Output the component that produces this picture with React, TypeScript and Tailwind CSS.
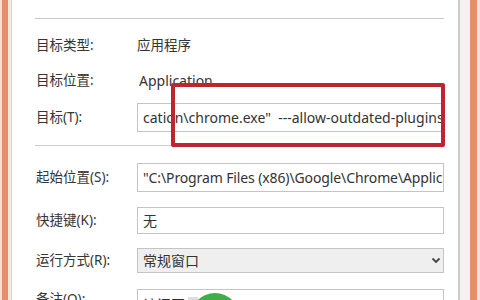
import React from 'react';

const font = { fontFamily: '"Noto Sans", "Noto Sans CJK SC", sans-serif' };

interface FieldProps {
  label: string;
  children: React.ReactNode;
  className?: string;
}

const Field: React.FC<FieldProps> = ({ label, children, className }) => (
  <div className={`flex shrink-0 items-center ${className ?? ''}`}>
    <div className="w-[101px] shrink-0 text-[13.5px] text-[#353535]">{label}</div>
    {children}
  </div>
);

const Box: React.FC<{ children?: React.ReactNode; className?: string }> = ({ children, className }) => (
  <div
    className={`flex-1 flex items-center border border-[#c4c4c4] pl-[5px] pr-[4px] text-[14px] text-[#333] whitespace-nowrap overflow-hidden ${className ?? ''}`}
  >
    {children}
  </div>
);

export default function App() {
  return (
    <div className="w-[480px] h-[300px] overflow-hidden flex bg-white" style={font}>
      {/* left window edge */}
      <div className="w-[2px] bg-[#f3e0d5]" />
      <div className="w-[6px] bg-[#e38f68]" />
      <div className="w-[3px] bg-[#f7e8e0]" />
      <div className="w-[1px] bg-[#d4d4d4]" />

      <div className="relative w-[446px] pl-[24px] pr-[14px] flex flex-col">
        <div className="h-[18px] shrink-0" />
        <div className="shrink-0 -ml-[1px] border-t border-[#c9c9c9]" />

        <Field label="目标类型:" className="mt-[14px] h-[24px]">
          <span className="text-[13.5px] text-[#333]">应用程序</span>
        </Field>
        <Field label="目标位置:" className="mt-[11px] h-[24px]">
          <span className="pl-[2px] text-[14px] text-[#333]">Application</span>
        </Field>
        <Field label="目标(T):" className="mt-[11px] h-[29px]">
          <Box className="h-[29px]">cation\chrome.exe"&nbsp; ---allow-outdated-plugins</Box>
        </Field>

        <div className="shrink-0 mt-[13px] -ml-[1px] border-t border-[#cfcfcf]" />

        <Field label="起始位置(S):" className="mt-[17px] h-[29px]">
          <Box className="h-[29px] tracking-[-0.12px]">"C:\Program Files (x86)\Google\Chrome\Applic</Box>
        </Field>
        <Field label="快捷键(K):" className="mt-[15px] h-[27px]">
          <Box className="h-[27px]">无</Box>
        </Field>
        <Field label="运行方式(R):" className="mt-[14px] h-[25px]">
          <Box className="h-[25px] bg-[#efefef] justify-between !pr-[2px]">
            <span>常规窗口</span>
            <svg width="10" height="7" viewBox="0 0 10 7">
              <path d="M1.5 1.5 L5 5 L8.5 1.5" fill="none" stroke="#444" strokeWidth="1.8" />
            </svg>
          </Box>
        </Field>
        <Field label="备注(O):" className="mt-[16px] h-[29px] items-start">
          <Box className="h-[29px] items-start pt-[4px]">
            <span>访问互</span>
            <span className="ml-[3px] mt-[3px] w-[10px] h-[10px] bg-[#dcdcdc]" />
          </Box>
        </Field>

        {/* red highlight frame */}
        <div className="absolute left-[159px] top-[83px] w-[274px] h-[64px] border-[4px] border-[#bf2530] rounded-[2px]" />
        {/* green watermark */}
        <div className="absolute left-[178px] top-[293px] w-[50px] h-[50px] rounded-full bg-[#3fae49]" />
      </div>

      {/* right window edge */}
      <div className="w-[2px] bg-[#cccccc]" />
      <div className="w-[10px] bg-[#f4f1ef]" />
      <div className="w-[7px] bg-[#e3916b]" />
      <div className="w-[3px] bg-[#f6e4da]" />
    </div>
  );
}
